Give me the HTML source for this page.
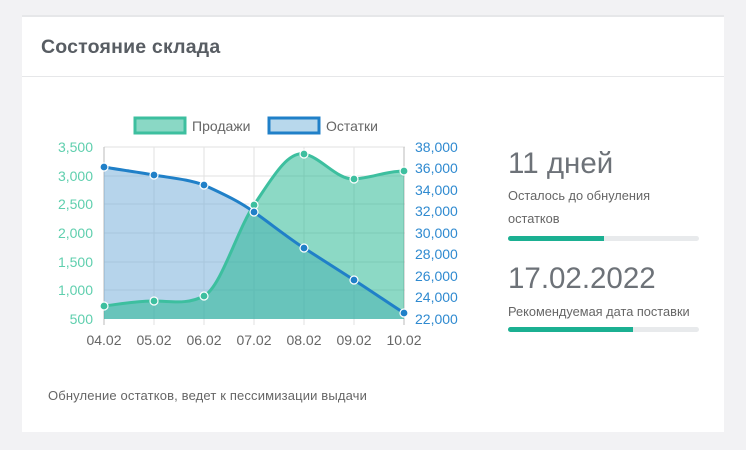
<!DOCTYPE html>
<html><head><meta charset="utf-8"><style>
body{margin:0;width:746px;height:450px;background:#f2f2f4;font-family:"Liberation Sans","DejaVu Sans",sans-serif;position:relative;overflow:hidden}
.card{position:absolute;left:22px;top:15px;width:702px;height:417px;background:#fff;border-top:2px solid #e6e7e9;box-sizing:border-box}
.hdr{position:absolute;left:0;top:0;width:100%;height:59px;border-bottom:1px solid #e6e7e9}
.t{position:absolute;left:19px;top:19px;font-size:19.5px;color:#585d63;font-weight:bold;letter-spacing:0.2px}
.big{position:absolute;left:486px;font-size:29.5px;color:#6d7278;font-weight:300}
.lbl{position:absolute;left:486px;font-size:12.8px;color:#666}
.bar{position:absolute;left:486px;width:191px;height:5px;background:#e8eaec;border-radius:3px;overflow:hidden}
.bar i{display:block;height:100%;background:#1bb092}
.foot{position:absolute;left:26px;top:371px;font-size:13px;color:#666;letter-spacing:0.15px}
</style></head><body>
<div class="card">
<div class="hdr"><div class="t">Состояние склада</div></div>
<div class="big" style="top:130px">11 дней</div>
<div class="lbl" style="top:171px">Осталось до обнуления</div>
<div class="lbl" style="top:194px">остатков</div>
<div class="bar" style="top:219px"><i style="width:96px"></i></div>
<div class="big" style="top:245px">17.02.2022</div>
<div class="lbl" style="top:287px">Рекомендуемая дата поставки</div>
<div class="bar" style="top:310px"><i style="width:125px"></i></div>
<div class="foot">Обнуление остатков, ведет к пессимизации выдачи</div>
</div>
<svg style="position:absolute;left:0;top:0" width="746" height="450" font-family="Liberation Sans, sans-serif">
<rect x="135" y="118" width="50" height="15" fill="#8ad8c5" stroke="#3dbf9f" stroke-width="3"/>
<text x="192" y="131" font-size="14" fill="#666">Продажи</text>
<rect x="269" y="118" width="50" height="15" fill="#b8d8ec" stroke="#2080c8" stroke-width="3"/>
<text x="326" y="131" font-size="14" fill="#666">Остатки</text>
<g stroke="#e2e2e2" stroke-width="1">
<line x1="104" y1="147" x2="405" y2="147"/><line x1="104" y1="176" x2="405" y2="176"/><line x1="104" y1="204" x2="405" y2="204"/><line x1="104" y1="233" x2="405" y2="233"/><line x1="104" y1="262" x2="405" y2="262"/><line x1="104" y1="290" x2="405" y2="290"/>
<line x1="154" y1="147" x2="154" y2="325"/><line x1="204" y1="147" x2="204" y2="325"/><line x1="254" y1="147" x2="254" y2="325"/><line x1="304" y1="147" x2="304" y2="325"/><line x1="354" y1="147" x2="354" y2="325"/>
</g>
<line x1="104" y1="147" x2="104" y2="325" stroke="#bbb"/>
<line x1="404" y1="147" x2="404" y2="325" stroke="#bbb"/>
<path d="M104,167 C121,170 137,172 154,175 C171,178 187,179 204,185 C221,193 237,200 254,212 C271,224 287,237 304,248 C321,259 337,269 354,280 C371,291 387,302 404,313 L404,319 L104,319Z" fill="rgba(110,170,215,0.5)"/>
<path d="M104,306 C120,304 137,301 154,301 C171,301 187,305 204,296 C221,287 237,230 254,205 C271,180 287,151 304,154 C321,157 337,180 354,179 C371,178 387,171 404,171 L404,319 L104,319Z" fill="rgba(26,180,140,0.5)"/>
<path d="M104,306 C120,304 137,301 154,301 C171,301 187,305 204,296 C221,287 237,230 254,205 C271,180 287,151 304,154 C321,157 337,180 354,179 C371,178 387,171 404,171" fill="none" stroke="#3dbf9f" stroke-width="3"/>
<path d="M104,167 C121,170 137,172 154,175 C171,178 187,179 204,185 C221,193 237,200 254,212 C271,224 287,237 304,248 C321,259 337,269 354,280 C371,291 387,302 404,313" fill="none" stroke="#2080c8" stroke-width="3"/>
<g fill="#3dbf9f" stroke="#fff" stroke-width="1.2">
<circle cx="104" cy="306" r="4"/><circle cx="154" cy="301" r="4"/><circle cx="204" cy="296" r="4"/><circle cx="254" cy="205" r="4"/><circle cx="304" cy="154" r="4"/><circle cx="354" cy="179" r="4"/><circle cx="404" cy="171" r="4"/></g>
<g fill="#2080c8" stroke="#fff" stroke-width="1.2">
<circle cx="104" cy="167" r="4"/><circle cx="154" cy="175" r="4"/><circle cx="204" cy="185" r="4"/><circle cx="254" cy="212" r="4"/><circle cx="304" cy="248" r="4"/><circle cx="354" cy="280" r="4"/><circle cx="404" cy="313" r="4"/></g>
<g font-size="14" fill="#5fcfae" text-anchor="end">
<text x="93" y="152">3,500</text><text x="93" y="181">3,000</text><text x="93" y="209">2,500</text><text x="93" y="238">2,000</text><text x="93" y="267">1,500</text><text x="93" y="295">1,000</text><text x="93" y="324">500</text></g>
<g font-size="14" fill="#2f8ad0">
<text x="415" y="152">38,000</text><text x="415" y="173">36,000</text><text x="415" y="195">34,000</text><text x="415" y="216">32,000</text><text x="415" y="238">30,000</text><text x="415" y="259">28,000</text><text x="415" y="281">26,000</text><text x="415" y="302">24,000</text><text x="415" y="324">22,000</text></g>
<g font-size="14" fill="#666" text-anchor="middle">
<text x="104" y="345">04.02</text><text x="154" y="345">05.02</text><text x="204" y="345">06.02</text><text x="254" y="345">07.02</text><text x="304" y="345">08.02</text><text x="354" y="345">09.02</text><text x="404" y="345">10.02</text></g>
</svg>
</body></html>
